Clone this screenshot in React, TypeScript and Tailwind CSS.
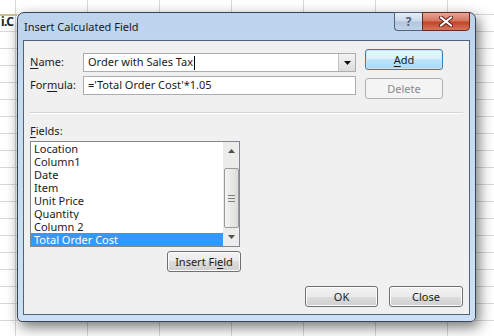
import type { ReactNode } from 'react'

const fields = ['Location', 'Column1', 'Date', 'Item', 'Unit Price', 'Quantity', 'Column 2', 'Total Order Cost']

function WinButton({
  children,
  width,
  variant = 'normal',
}: {
  children: ReactNode
  width: string
  variant?: 'normal' | 'default' | 'disabled'
}) {
  const look =
    variant === 'default'
      ? 'border-[#3c7fb1] bg-[linear-gradient(to_bottom,#eaf6fd_0%,#d9f0fc_50%,#bee6fd_50%,#a7d9f5_100%)] text-[#1b1b1b] shadow-[inset_0_0_0_1px_#c8e4f6]'
      : variant === 'disabled'
        ? 'border-[#adb2b5] bg-[#f4f4f4] text-[#8b8b8b]'
        : 'border-[#707070] bg-[linear-gradient(to_bottom,#f2f2f2_0%,#ebebeb_50%,#dddddd_50%,#cfcfcf_100%)] text-[#1b1b1b] shadow-[inset_0_0_0_1px_#fcfcfc]'
  return (
    <div className={`${width} h-[21px] rounded-[3px] border flex items-center justify-center leading-none ${look}`}>
      {children}
    </div>
  )
}

export default function App() {
  return (
    <div
      className="w-[494px] h-[336px] overflow-hidden relative bg-white bg-[linear-gradient(to_right,#d8d8d8_1px,transparent_1px),linear-gradient(to_bottom,#d8d8d8_1px,transparent_1px)] bg-[length:72px_17px] bg-[position:15px_14px] pt-[12px] pl-[17px]"
      style={{ fontFamily: '"Noto Sans", "Open Sans", sans-serif' }}
    >
      {/* cell text behind the dialog */}
      <div className="absolute left-0 top-[14px] w-[17px] h-[2px] bg-[#c9c38a]" />
      <div className="absolute left-[1px] top-[16px] text-[12px] font-bold text-[#222] leading-none tracking-[-0.5px]">i.C</div>

      {/* dialog window */}
      <div className="relative w-[459px] h-[310px] rounded-t-[7px] rounded-b-[5px] border border-[#34465c] bg-[linear-gradient(to_bottom,#bcd3ec_0%,#c6daf0_25%,#cde0f3_100%)] shadow-[3px_5px_14px_rgba(0,0,0,0.55)] flex flex-col px-[5px] pb-[6px] text-[11px] text-[#1b1b1b]">
        {/* title bar */}
        <div className="h-[27px] flex justify-between">
          <div className="pl-[1px] pt-[5px] text-[11px] text-[#1a1a1a] leading-[18px]">Insert Calculated Field</div>
          <div className="flex -mt-[1px] h-[19px]">
            <div className="w-[28px] h-full border border-[#50637a] border-r-0 rounded-bl-[4px] bg-[linear-gradient(to_bottom,#e4edf7_0%,#cddbeb_45%,#b3c6de_55%,#c2d3e8_100%)] flex items-center justify-center text-[12px] font-bold text-[#4e5d75] leading-none">
              ?
            </div>
            <div className="w-[48px] h-full border border-[#6a2a22] rounded-br-[4px] bg-[linear-gradient(to_bottom,#e8a595_0%,#d7765f_45%,#c4432b_55%,#d5765c_100%)] flex items-center justify-center">
              <svg width="14" height="11" viewBox="0 0 14 11">
                <path d="M2 1.5 L12 9.5 M12 1.5 L2 9.5" stroke="#5a1e16" strokeWidth="4" strokeLinecap="round" />
                <path d="M2 1.5 L12 9.5 M12 1.5 L2 9.5" stroke="#ffffff" strokeWidth="2.2" strokeLinecap="round" />
              </svg>
            </div>
          </div>
        </div>

        {/* client area */}
        <div className="flex-1 border border-[#50637d] bg-[#f0f0f0] flex flex-col pt-[8px] pl-[6px] pr-[6px]">
          <div className="flex">
            <div className="flex flex-col gap-[4px] mt-[4px]">
              <div className="flex items-center h-[19px]">
                <span className="w-[53px]">
                  <span className="underline underline-offset-2">N</span>ame:
                </span>
                <div className="w-[273px] h-[19px] border border-[#abadb3] bg-white flex items-center">
                  <div className="flex-1 pl-[4px] flex items-center">
                    <span>Order with Sales Tax</span>
                    <span className="w-px h-[14px] bg-black ml-[1px]" />
                  </div>
                  <div className="w-[17px] h-[17px] border-l border-[#c3c3c3] bg-[linear-gradient(to_bottom,#f4f4f4,#dcdcdc)] flex items-center justify-center">
                    <svg width="7" height="4" viewBox="0 0 7 4">
                      <path d="M0 0 H7 L3.5 4 Z" fill="#111" />
                    </svg>
                  </div>
                </div>
              </div>
              <div className="flex items-center h-[19px]">
                <span className="w-[53px]">
                  For<span className="underline underline-offset-2">m</span>ula:
                </span>
                <div className="w-[273px] h-[19px] border border-[#abadb3] bg-white flex items-center pl-[4px]">
                  ='Total Order Cost'*1.05
                </div>
              </div>
            </div>
            <div className="flex flex-col gap-[8px] ml-[9px]">
              <WinButton width="w-[78px]" variant="default">
                <span>
                  <span className="underline underline-offset-2">A</span>dd
                </span>
              </WinButton>
              <WinButton width="w-[78px]" variant="disabled">
                Delete
              </WinButton>
            </div>
          </div>

          <div className="mt-[13px] w-[433px] h-[2px] border-t border-[#d5d5d5] border-b border-b-white" />

          <div className="mt-[9px] leading-[16px]">
            <span className="underline underline-offset-2">F</span>ields:
          </div>

          <div className="mt-[2px] w-[211px] flex flex-col">
            <div className="w-[210px] h-[106px] border border-[#828790] bg-white flex">
              <div className="flex-1 flex flex-col">
                {fields.map((f, i) => (
                  <div
                    key={f}
                    className={`h-[13px] leading-[13px] pl-[3px] whitespace-nowrap overflow-hidden ${
                      i === fields.length - 1 ? 'bg-[#3399ff] text-white' : ''
                    }`}
                  >
                    {f}
                  </div>
                ))}
              </div>
              <div className="w-[16px] bg-[#ececec] flex flex-col items-center">
                <div className="h-[17px] flex items-center justify-center">
                  <svg width="7" height="4" viewBox="0 0 7 4">
                    <path d="M0 4 H7 L3.5 0 Z" fill="#505050" />
                  </svg>
                </div>
                <div className="mt-[9px] w-[15px] h-[60px] rounded-[2px] border border-[#9b9b9b] bg-[linear-gradient(to_right,#f4f4f4,#dcdcdc)] flex flex-col items-center justify-center gap-[2px]">
                  <div className="w-[7px] h-px bg-[#808080]" />
                  <div className="w-[7px] h-px bg-[#808080]" />
                  <div className="w-[7px] h-px bg-[#808080]" />
                </div>
                <div className="flex-1 flex items-center justify-center">
                  <svg width="7" height="4" viewBox="0 0 7 4">
                    <path d="M0 0 H7 L3.5 4 Z" fill="#505050" />
                  </svg>
                </div>
              </div>
            </div>
            <div className="self-end mt-[4px]">
              <WinButton width="w-[74px]">
                <span>
                  Insert Fi<span className="underline underline-offset-2">e</span>ld
                </span>
              </WinButton>
            </div>
          </div>

          <div className="mt-[14px] flex justify-end gap-[11px]">
            <WinButton width="w-[73px]">OK</WinButton>
            <WinButton width="w-[74px]">Close</WinButton>
          </div>
        </div>
      </div>
    </div>
  )
}
